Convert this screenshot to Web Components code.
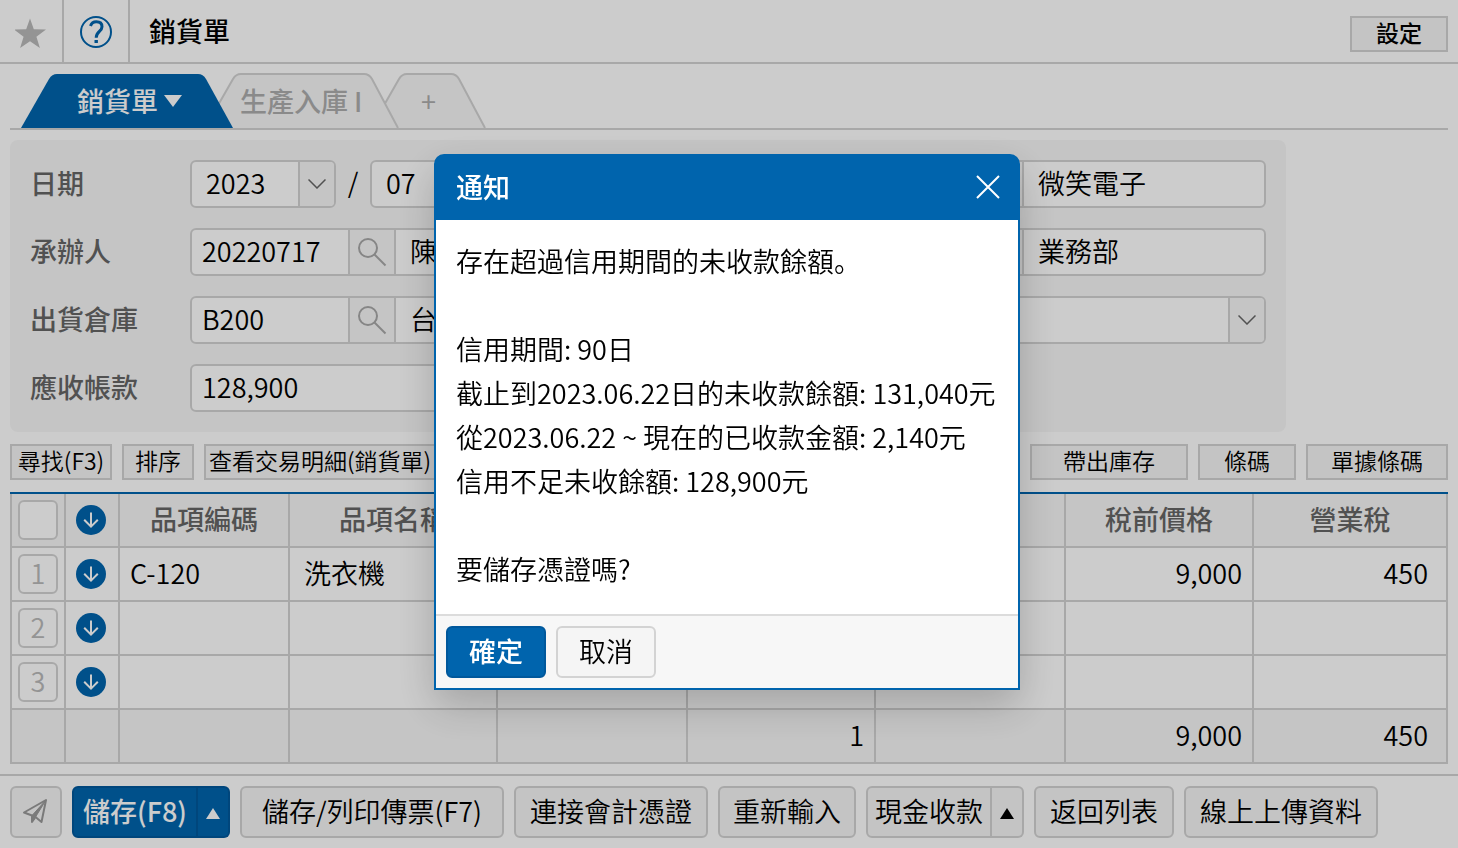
<!DOCTYPE html>
<html lang="zh-Hant">
<head>
<meta charset="utf-8">
<meta name="viewport" content="width=device-width, initial-scale=1">
<title>銷貨單</title>
<style>
  :root {
    --blue: #0064ad;
    --blue-dark: #00589c;
    --line: #d3d3d3;
    --soft: #f7f7f7;
    --muted: #666;
  }
  body {
    margin: 0;
    background: #fff;
    color: #000;
    font: 350 27px/40px "Noto Sans CJK SC", sans-serif;
    font-feature-settings: "locl" 0;
  }
</style>
</head>
<body>
<sales-page></sales-page>

<script>
const define = (name, html, setup) => {
  const template = document.createElement('template');
  template.innerHTML = html;
  customElements.define(name, class extends HTMLElement {
    constructor() {
      super();
      this.attachShadow({ mode: 'open' }).append(template.content.cloneNode(true));
    }
    connectedCallback() {
      if (setup && !this.ready) { this.ready = true; setup(this, this.shadowRoot); }
    }
  });
};

/* Push button: default 52px tall, "small" for toolbars, "primary" for the blue one, "split" adds a menu arrow */
define('ui-button', `
<style>
  :host { display: inline-flex; height: 52px; flex: none; box-sizing: border-box; min-width: 52px; }
  button { font: inherit; color: inherit; line-height: 40px; white-space: nowrap; background: #f5f5f5;
    border: 2px solid var(--line); border-radius: 6px; box-sizing: border-box; padding: 0 0 2px; margin: 0; cursor: pointer;
    display: flex; align-items: center; justify-content: center; }
  .main { flex: 1; }
  .more { display: none; width: 32px; padding: 2px 0 0; border-left: 0; border-radius: 0 6px 6px 0; }
  :host([split]) .main { border-radius: 6px 0 0 6px; }
  :host([split]) .more { display: flex; }
  :host([primary]) button { background: var(--blue); border-color: var(--blue-dark); color: #fff; font-weight: 500; }
  :host([small]) { height: 36px; font-size: 23px; }
  :host([small]) button { border-radius: 0; line-height: 28px; padding-bottom: 4px; }
  :host([start]) .main { justify-content: flex-start; padding-left: 3px; }
</style>
<button class="main" type="button"><slot></slot></button>
<button class="more" type="button" aria-label="更多"><svg width="14" height="11" viewBox="0 0 14 11"><path d="M7 0 14 11H0Z" fill="currentColor"/></svg></button>
`);

define('page-header', `
<style>
  :host { display: flex; height: 62px; border-bottom: 2px solid var(--line); align-items: stretch; }
  button { border: 0; border-right: 2px solid var(--line); background: none; padding: 0; display: flex;
    align-items: center; justify-content: center; width: 64px; }
  .help { width: 66px; }
  h1 { flex: 1; margin: 0; padding-left: 19px; font-size: 27px; font-weight: 500; line-height: 62px; }
  .end { display: flex; align-items: center; padding: 6px 10px 0 0; font-weight: 500; }
  ui-button { width: 98px; }
</style>
<button type="button" aria-label="我的最愛"><svg width="32" height="62" viewBox="0 0 32 62"><path d="M16 18.500l3.800 10.800 12.200.2-9.600 7.200 3.500 11.300L16 41.200 6.100 48l3.500-11.300L0 29.500l12.200-.2z" fill="#b9b9b9" transform="translate(-1 0)"/></svg></button>
<button class="help" type="button" aria-label="說明"><svg width="34" height="34" viewBox="0 0 34 34" fill="none" stroke="var(--blue)"><circle cx="17" cy="18" r="15" stroke-width="2"/><path d="M11.500 12C12.500 9 14.500 7.800 17.300 7.800c3.600 0 5.700 2 5.700 4.900 0 4.700-5.800 4.900-5.800 11" stroke-width="3"/><path d="M17.200 26v3" stroke-width="3.400"/></svg></button>
<h1>銷貨單</h1>
<div class="end"><ui-button small>設定</ui-button></div>
`);

define('page-tabs', `
<style>
  :host { display: flex; align-items: flex-end; height: 64px; margin: 0 10px; padding-left: 11px; border-bottom: 2px solid var(--line); }
  button { display: grid; align-items: center; border: 0; background: none; padding: 0; height: 56px; font: inherit; line-height: 40px; color: #adadad; font-weight: 500; }
  button > * { grid-area: 1 / 1; }
  svg.shape { display: block; fill: var(--soft); stroke: var(--line); stroke-width: 2; }
  .active { color: #fff; z-index: 2; }
  .active .shape { fill: var(--blue); stroke: none; }
  .second { margin-left: -28px; z-index: 1; }
  .third { margin-left: -28px; }
  .label { display: flex; align-items: center; justify-content: center; gap: 6px; padding-top: 2px; }
  .active .label { padding-left: 5px; }
  .second .label { justify-content: flex-start; padding-left: 35px; }
  .third { font-weight: 400; }
</style>
<button class="active" type="button">
  <svg class="shape" width="212" height="56" viewBox="0 0 212 56"><path d="M0 56 28 7Q31 2 36 2H177Q182 2 185 7L212 56Z"/></svg>
  <span class="label">銷貨單<svg width="18" height="12" viewBox="0 0 18 12"><path d="M0 0H18L9 12Z" fill="#fff"/></svg></span>
</button>
<button class="second" type="button">
  <svg class="shape" width="194" height="56" viewBox="0 0 194 56"><path d="M0 56 28 7Q31 2 36 2H159Q164 2 167 7L193 56"/></svg>
  <span class="label">生產入庫 I</span>
</button>
<button class="third" type="button" aria-label="新增分頁">
  <svg class="shape" width="115" height="56" viewBox="0 0 115 56"><path d="M0 56 28 7Q31 2 36 2H80Q85 2 88 7L114 56"/></svg>
  <span class="label">+</span>
</button>
`);

/* Select with its arrow in a box of its own */
define('ui-select', `
<style>
  :host { display: grid; height: 48px; box-sizing: border-box; border: 2px solid var(--line); border-radius: 6px; background: #fff; overflow: hidden; }
  select { grid-area: 1 / 1; appearance: none; border: 0; background: none; font: inherit; color: inherit; box-sizing: border-box; padding: 0 40px 2px 14px; margin: 0; min-width: 0; height: 44px; }
  span { grid-area: 1 / 1; justify-self: end; pointer-events: none; width: 34px; height: 44px; background: var(--soft); border-left: 2px solid var(--line); display: flex; align-items: center; justify-content: center; }
</style>
<select></select>
<span><svg width="18" height="10" viewBox="0 0 18 10" fill="none" stroke="#666" stroke-width="1.500"><path d="M.5.500 9 9 17.500.500"/></svg></span>
`, (host, root) => {
  const select = root.querySelector('select');
  select.add(new Option(host.getAttribute('value') || ''));
  select.setAttribute('aria-label', host.getAttribute('name') || '');
});

/* Labelled row of the form; data-kind picks the control */
define('form-field', `
<style>
  :host { display: grid; grid-template-columns: 160px 1fr; align-items: center; min-width: 0; }
  label { color: var(--muted); font-weight: 500; padding-bottom: 2px; }
  .control { display: flex; align-items: center; min-width: 0; }
  .box { display: flex; flex: 1; min-width: 0; height: 44px; border: 2px solid var(--line); border-radius: 6px; background: #fff; overflow: hidden; }
  input { font: inherit; color: inherit; border: 0; background: none; box-sizing: border-box; padding: 0 10px 4px; margin: 0; min-width: 0; flex: 1; height: 44px; }
  .code { flex: none; width: 156px; }
  .name { padding-left: 14px; }
  .find { flex: none; width: 48px; box-sizing: border-box; border: solid var(--line); border-width: 0 2px; background: var(--soft); padding: 0; display: flex; align-items: center; justify-content: center; }
  .year { width: 146px; }
  .month { width: 110px; }
  .slash { width: 34px; text-align: center; padding-bottom: 4px; }
  .wide { flex: 1; }
</style>
<label for="c"></label>
<div class="control"></div>
`, (host, root) => {
  const { kind, label = '', value = '', name = '' } = host.dataset;
  const control = root.querySelector('.control');
  root.querySelector('label').textContent = label;
  const title = host.getAttribute('aria-label') || label;
  const find = `<button class="find" type="button" aria-label="搜尋"><svg width="30" height="30" viewBox="0 0 30 30" fill="none" stroke="#a8a8a8" stroke-width="2"><circle cx="11" cy="11" r="9"/><path d="M17.500 17.500 28.500 28.500"/></svg></button>`;
  control.innerHTML = {
    date: `<ui-select class="year" name="年" value="2023"></ui-select><span class="slash">/</span><ui-select class="month" name="月" value="07"></ui-select>`,
    lookup: `<div class="box"><input class="code" id="c" aria-label="${title}" value="${value}">${find}<input class="name" aria-label="${title}名稱" value="${name}"></div>`,
    text: `<div class="box"><input id="c" aria-label="${title}" value="${value}"></div>`,
    select: `<ui-select class="wide" name="${title}" value="${value}"></ui-select>`
  }[kind];
});

define('sales-form', `
<style>
  :host { display: grid; grid-template-columns: 598fr 608fr; gap: 20px 30px; box-sizing: border-box; max-width: 1276px;
    margin: 10px 10px 0; padding: 20px; background: var(--soft); border-radius: 8px; }
</style>
<form-field data-kind="date" data-label="日期"></form-field>
<form-field data-kind="lookup" aria-label="客戶" data-name="微笑電子"></form-field>
<form-field data-kind="lookup" data-label="承辦人" data-value="20220717" data-name="陳"></form-field>
<form-field data-kind="lookup" aria-label="部門" data-name="業務部"></form-field>
<form-field data-kind="lookup" data-label="出貨倉庫" data-value="B200" data-name="台"></form-field>
<form-field data-kind="select" aria-label="交易類型"></form-field>
<form-field data-kind="text" data-label="應收帳款" data-value="128,900"></form-field>
`);

define('grid-toolbar', `
<style>
  :host { display: flex; gap: 10px; margin: 12px 10px; }
  .gap { flex: 1; }
</style>
<ui-button small style="width:102px">尋找(F3)</ui-button>
<ui-button small style="width:72px">排序</ui-button>
<ui-button small start style="width:240px">查看交易明細(銷貨單)</ui-button>
<span class="gap"></span>
<ui-button small style="width:158px">帶出庫存</ui-button>
<ui-button small style="width:98px">條碼</ui-button>
<ui-button small style="width:142px">單據條碼</ui-button>
`);

define('insert-button', `
<style>
  :host { display: block; padding-right: 2px; }
  button { display: flex; width: 30px; height: 30px; margin: 0 auto; padding: 0; border: 0; border-radius: 50%; background: var(--blue); }
</style>
<button type="button" aria-label="插入列"><svg width="30" height="30" viewBox="0 0 30 30" fill="none" stroke="#fff" stroke-width="2"><path d="M15 7.500V21.500M8.200 14.800 15 21.600 21.800 14.800"/></svg></button>
`);

define('item-grid', `
<style>
  :host { display: block; margin: 0 10px; }
  table { width: 100%; table-layout: fixed; border-collapse: separate; border-spacing: 0; border-top: 2px solid var(--blue); }
  th, td { box-sizing: border-box; height: 54px; padding: 0; border: solid var(--line); border-width: 0 2px 2px 0; overflow: hidden; white-space: nowrap; text-align: left; line-height: 40px; }
  tr > :first-child { border-left-width: 2px; }
  th { font-weight: 500; color: var(--muted); text-align: center; }
  th.text, .code, .name, .num { padding-bottom: 2px; }
  thead tr, tfoot tr { background: var(--soft); }
  .code { padding-left: 10px; }
  .name { padding-left: 14px; }
  .num { text-align: right; padding-right: 10px; }
  .num:last-child { padding-right: 18px; }
  .pick, input { display: block; box-sizing: border-box; width: 40px; height: 40px; margin: 0 auto; padding: 0; border: 2px solid var(--line); border-radius: 6px; background: #fff; font: inherit; line-height: 34px; color: #b9b9b9; }
  .pick { padding-bottom: 2px; }
  input { appearance: none; }
</style>
<table>
  <colgroup><col style="width:56px"><col style="width:54px"><col style="width:170px"><col style="width:208px"><col style="width:190px"><col style="width:188px"><col style="width:190px"><col style="width:188px"><col style="width:194px"></colgroup>
  <thead><tr><th><input type="checkbox" aria-label="全選"></th><th><insert-button></insert-button></th><th class="text">品項編碼</th><th class="text">品項名稱</th><th></th><th></th><th></th><th class="text">稅前價格</th><th class="text">營業稅</th></tr></thead>
  <tbody>
    <tr><td><button class="pick" type="button">1</button></td><td><insert-button></insert-button></td><td class="code">C-120</td><td class="name">洗衣機</td><td></td><td></td><td></td><td class="num">9,000</td><td class="num">450</td></tr>
    <tr><td><button class="pick" type="button">2</button></td><td><insert-button></insert-button></td><td></td><td></td><td></td><td></td><td></td><td></td><td></td></tr>
    <tr><td><button class="pick" type="button">3</button></td><td><insert-button></insert-button></td><td></td><td></td><td></td><td></td><td></td><td></td><td></td></tr>
  </tbody>
  <tfoot><tr><td></td><td></td><td></td><td></td><td></td><td class="num">1</td><td></td><td class="num">9,000</td><td class="num">450</td></tr></tfoot>
</table>
`);

define('action-bar', `
<style>
  :host { display: flex; gap: 10px; margin-top: 10px; padding: 10px; border-top: 2px solid var(--line); }
  svg { display: block; }
</style>
<ui-button style="width:52px"><svg role="img" aria-label="傳送" width="28" height="26" viewBox="0 0 28 26" fill="none" stroke="#999" stroke-width="2" stroke-linejoin="round"><path d="M2 14.500 24 2 19.500 24 13.500 19 10 24V17.500Z"/><path d="M10 17.500 24 2 13.500 19 10 24Z" fill="#999" stroke-width="1"/></svg></ui-button>
<ui-button primary split style="width:158px">儲存(F8)</ui-button>
<ui-button style="width:264px">儲存/列印傳票(F7)</ui-button>
<ui-button style="width:194px">連接會計憑證</ui-button>
<ui-button style="width:138px">重新輸入</ui-button>
<ui-button split style="width:158px">現金收款</ui-button>
<ui-button style="width:140px">返回列表</ui-button>
<ui-button style="width:194px">線上上傳資料</ui-button>
`);

/* Modal notice centred over the dimmed page */
define('notice-dialog', `
<style>
  :host { position: fixed; inset: 0; z-index: 10; display: flex; align-items: center; justify-content: center;
    padding: 0 4px 4px 0; background: rgba(0, 0, 0, .2); }
  section { box-sizing: border-box; width: 586px; border: 2px solid var(--blue); border-radius: 10px 10px 0 0; background: var(--blue); box-shadow: 0 16px 40px rgba(0, 0, 0, .2); }
  header { box-sizing: border-box; display: flex; align-items: center; justify-content: space-between; height: 64px; padding: 0 18px 2px 20px; color: #fff; }
  h2 { margin: 0; font-size: 27px; font-weight: 500; }
  header button { border: 0; background: none; padding: 0; display: flex; }
  .body { padding: 19px 0 23px 20px; line-height: 44px; white-space: pre; background: #fff; }
  footer { display: flex; gap: 10px; padding: 10px; border-top: 2px solid #dcdcdc; background: var(--soft); }
  ui-button { width: 100px; }
</style>
<section role="dialog" aria-modal="true" aria-labelledby="t">
  <header><h2 id="t">通知</h2><button type="button" aria-label="關閉"><svg width="24" height="24" viewBox="0 0 24 24" fill="none" stroke="#fff" stroke-width="2"><path d="M1 1 23 23M23 1 1 23"/></svg></button></header>
  <div class="body"><slot></slot></div>
  <footer><ui-button primary>確定</ui-button><ui-button>取消</ui-button></footer>
</section>
`);

define('sales-page', `
<style>
  :host { display: block; min-height: 100vh; }
</style>
<page-header></page-header>
<page-tabs></page-tabs>
<sales-form></sales-form>
<grid-toolbar></grid-toolbar>
<item-grid></item-grid>
<action-bar></action-bar>
<notice-dialog>存在超過信用期間的未收款餘額。

信用期間: 90日
截止到2023.06.22日的未收款餘額: 131,040元
從2023.06.22 ~ 現在的已收款金額: 2,140元
信用不足未收餘額: 128,900元

要儲存憑證嗎?</notice-dialog>
`);
</script>
</body>
</html>
